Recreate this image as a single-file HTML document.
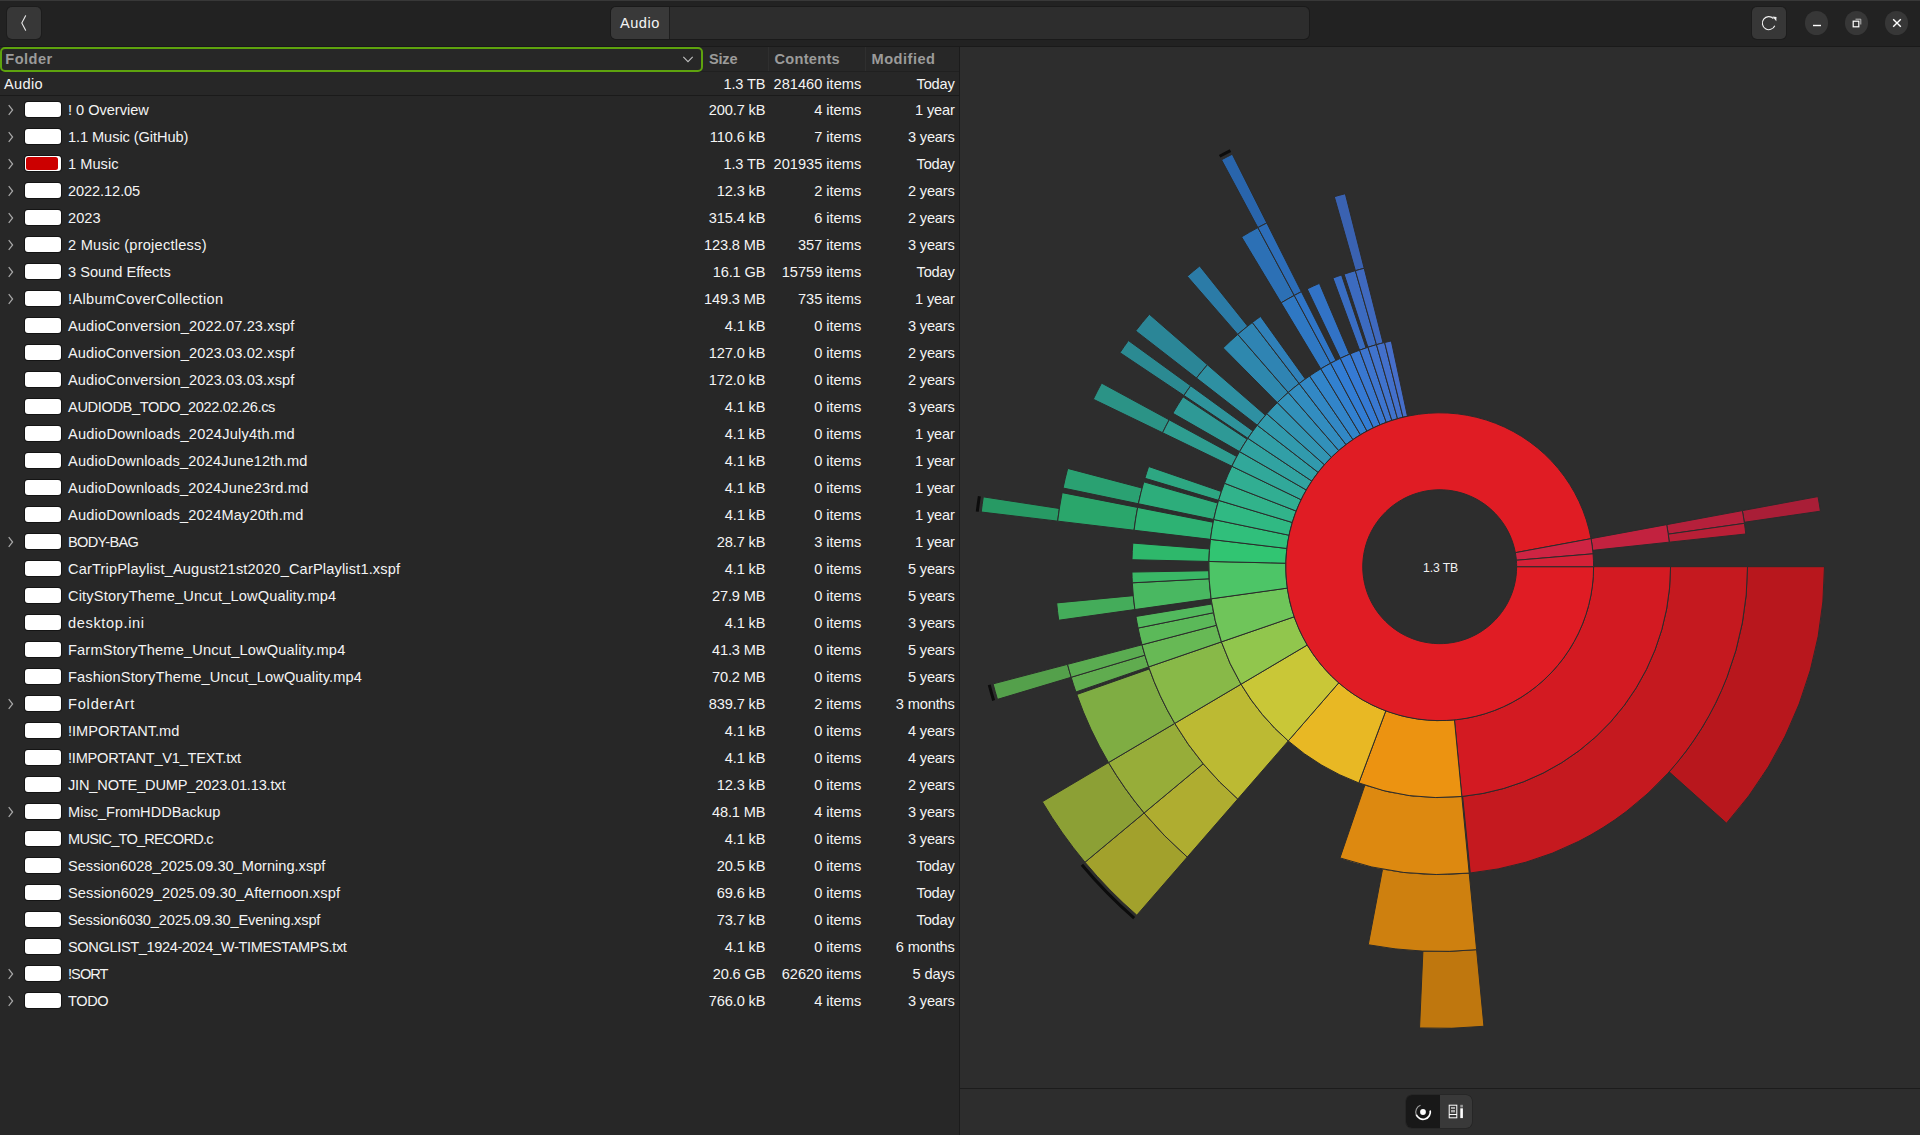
<!DOCTYPE html><html><head><meta charset="utf-8"><title>Disk Usage Analyzer</title><style>
html,body{margin:0;padding:0}
body{width:1920px;height:1135px;overflow:hidden;background:#272727;position:relative;font-family:"Liberation Sans",sans-serif;font-size:14.6px;color:#f4f4f4}
#hb{position:absolute;left:0;top:0;width:1920px;height:47px;background:#222222;box-shadow:inset 0 1px 0 #383838, inset 0 -1px 0 #1a1a1a}
.btn{position:absolute;background:#373737;border-radius:5px;box-shadow:0 0 0 1px #1c1c1c}
#back{left:7px;top:7px;width:34px;height:32px}
#refresh{left:1752px;top:7px;width:34px;height:32px}
#path{position:absolute;left:611px;top:7px;width:698px;height:32px;background:#2d2d2d;border-radius:5px;box-shadow:0 0 0 1px #1a1a1a;overflow:hidden}
#path .cur{position:absolute;left:0;top:0;width:58px;height:32px;background:#393939;border-right:1px solid #1e1e1e}
#path .cur span{position:absolute;left:9px;top:7.5px;line-height:17px}
.wc{position:absolute;top:11.4px;width:23.2px;height:23.2px;border-radius:12px;background:#373737}
#list{position:absolute;left:0;top:47px;width:959px;height:1088px;background:#272727}
#sep{position:absolute;left:959px;top:47px;width:1px;height:1088px;background:#1b1b1b}
#chartp{position:absolute;left:960px;top:47px;width:960px;height:1088px;background:#2d2d2d}
#chartp .chart{position:absolute;left:0;top:0}
#bbar{position:absolute;left:0;top:1041px;width:960px;height:47px;border-top:1px solid #1c1c1c;box-sizing:border-box}
.hdr{position:absolute;top:47px;height:24px;font-weight:bold;color:#9b9b9a;line-height:24px}
.hsep{position:absolute;top:47px;width:1px;height:24px;background:#2f2f2f}
#focus{position:absolute;left:0;top:47px;width:703px;height:25px;box-sizing:border-box;border:2px solid #5ea30e;border-radius:5px}
.hline{position:absolute;left:0;width:959px;height:1px;background:#1a1a1a}
.row{position:absolute;left:0;width:959px;height:27px;line-height:27px;white-space:nowrap}
.row .exp{position:absolute;left:6.6px;top:7.4px}
.row .sw{position:absolute;left:25px;top:5.4px;width:36.3px;height:15.4px;background:#fff;border-radius:3px;box-shadow:0 0 0 1px #141414}
.row .sw.red:after{content:'';position:absolute;left:1.1px;top:1.1px;width:32.2px;height:13.2px;border-radius:2.5px;background:#cc0000}
.row .nm{position:absolute;left:68px;top:0}
.row .c1,.row .c2,.row .c3{position:absolute;top:0;text-align:right}
.row .c1{right:193.6px;letter-spacing:-0.12px}.row .c2{right:97.8px}.row .c3{right:4.3px;letter-spacing:-0.15px}
#tg{position:absolute;left:446.3px;top:1048.4px;width:66.2px;height:32.8px;border-radius:6px;background:#393939;overflow:hidden;box-shadow:0 0 0 0.6px #222}
#tg .on{position:absolute;left:0;top:0;width:33.3px;height:33px;background:#181818}
</style></head><body>
<div id="hb">
<div class="btn" id="back"><svg width="34" height="32" viewBox="0 0 34 32"><path d="M18.6 8.7 L14.8 16 L18.6 23.3" fill="none" stroke="#e8e8e8" stroke-width="1.1" stroke-linecap="round" stroke-linejoin="round"/></svg></div>
<div id="path"><div class="cur"><span style="letter-spacing:0.500px">Audio</span></div></div>
<div class="btn" id="refresh"><svg width="34" height="32" viewBox="0 0 34 32"><path d="M22.8 18.8 A6.5 6.5 0 1 1 21.4 11.5" fill="none" stroke="#f0f0f0" stroke-width="1.1"/><path d="M20.4 9.5 L24.5 10 L24.3 14.3 Z" fill="#f0f0f0"/></svg></div>
<div class="wc" style="left:1805.3px"><svg style="position:absolute;left:-0.4px;top:-0.4px" width="24" height="24"><path d="M8 14.5H16" stroke="#fff" stroke-width="1.4"/></svg></div>
<div class="wc" style="left:1845.3px"><svg style="position:absolute;left:-0.4px;top:-0.4px" width="24" height="24"><rect x="8.2" y="10.2" width="5.6" height="5.6" fill="none" stroke="#fff" stroke-width="1.2"/><path d="M10.5 8.2H15.8V13.5" fill="none" stroke="#bbb" stroke-width="1"/></svg></div>
<div class="wc" style="left:1885.1px"><svg style="position:absolute;left:-0.4px;top:-0.4px" width="24" height="24"><path d="M8.2 8.2L15.8 15.8M15.8 8.2L8.2 15.8" stroke="#fff" stroke-width="1.4"/></svg></div>
</div>
<div id="list"></div>
<div class="hdr" style="left:5.3px;letter-spacing:0.450px">Folder</div>
<div class="hdr" style="left:708.9px;letter-spacing:-0.200px">Size</div>
<div class="hdr" style="left:774.4px;letter-spacing:0.300px">Contents</div>
<div class="hdr" style="left:871.5px;letter-spacing:0.500px">Modified</div>
<div class="hsep" style="left:768px"></div><div class="hsep" style="left:865px"></div>
<svg style="position:absolute;left:681px;top:54px" width="14" height="10" viewBox="0 0 14 10"><path d="M2.3 2.9 L7 7.6 L11.7 2.9" fill="none" stroke="#c0c0c0" stroke-width="1.1"/></svg>
<div class="hline" style="top:71px;background:#202020"></div>
<div id="focus"></div>
<div class="row" style="top:70.5px"><span class="nm" style="left:4px;letter-spacing:0.350px">Audio</span><span class="c1">1.3 TB</span><span class="c2">281460 items</span><span class="c3">Today</span></div>
<div class="hline" style="top:95px"></div>
<div class="row" style="top:96.5px">
<svg class="exp" width="8" height="12" viewBox="0 0 8 12"><path d="M1.7 1.2 L5.6 6 L1.7 10.8" fill="none" stroke="#a9a9a9" stroke-width="1.2"/></svg>
<span class="sw"></span>
<span class="nm" style="letter-spacing:-0.027px">! 0 Overview</span>
<span class="c1">200.7 kB</span><span class="c2">4 items</span><span class="c3">1 year</span>
</div>
<div class="row" style="top:123.5px">
<svg class="exp" width="8" height="12" viewBox="0 0 8 12"><path d="M1.7 1.2 L5.6 6 L1.7 10.8" fill="none" stroke="#a9a9a9" stroke-width="1.2"/></svg>
<span class="sw"></span>
<span class="nm" style="letter-spacing:-0.076px">1.1 Music (GitHub)</span>
<span class="c1">110.6 kB</span><span class="c2">7 items</span><span class="c3">3 years</span>
</div>
<div class="row" style="top:150.5px">
<svg class="exp" width="8" height="12" viewBox="0 0 8 12"><path d="M1.7 1.2 L5.6 6 L1.7 10.8" fill="none" stroke="#a9a9a9" stroke-width="1.2"/></svg>
<span class="sw red"></span>
<span class="nm" style="letter-spacing:0.033px">1 Music</span>
<span class="c1">1.3 TB</span><span class="c2">201935 items</span><span class="c3">Today</span>
</div>
<div class="row" style="top:177.5px">
<svg class="exp" width="8" height="12" viewBox="0 0 8 12"><path d="M1.7 1.2 L5.6 6 L1.7 10.8" fill="none" stroke="#a9a9a9" stroke-width="1.2"/></svg>
<span class="sw"></span>
<span class="nm" style="letter-spacing:-0.089px">2022.12.05</span>
<span class="c1">12.3 kB</span><span class="c2">2 items</span><span class="c3">2 years</span>
</div>
<div class="row" style="top:204.5px">
<svg class="exp" width="8" height="12" viewBox="0 0 8 12"><path d="M1.7 1.2 L5.6 6 L1.7 10.8" fill="none" stroke="#a9a9a9" stroke-width="1.2"/></svg>
<span class="sw"></span>
<span class="nm" style="letter-spacing:0.067px">2023</span>
<span class="c1">315.4 kB</span><span class="c2">6 items</span><span class="c3">2 years</span>
</div>
<div class="row" style="top:231.5px">
<svg class="exp" width="8" height="12" viewBox="0 0 8 12"><path d="M1.7 1.2 L5.6 6 L1.7 10.8" fill="none" stroke="#a9a9a9" stroke-width="1.2"/></svg>
<span class="sw"></span>
<span class="nm" style="letter-spacing:0.235px">2 Music (projectless)</span>
<span class="c1">123.8 MB</span><span class="c2">357 items</span><span class="c3">3 years</span>
</div>
<div class="row" style="top:258.5px">
<svg class="exp" width="8" height="12" viewBox="0 0 8 12"><path d="M1.7 1.2 L5.6 6 L1.7 10.8" fill="none" stroke="#a9a9a9" stroke-width="1.2"/></svg>
<span class="sw"></span>
<span class="nm" style="letter-spacing:0.000px">3 Sound Effects</span>
<span class="c1">16.1 GB</span><span class="c2">15759 items</span><span class="c3">Today</span>
</div>
<div class="row" style="top:285.5px">
<svg class="exp" width="8" height="12" viewBox="0 0 8 12"><path d="M1.7 1.2 L5.6 6 L1.7 10.8" fill="none" stroke="#a9a9a9" stroke-width="1.2"/></svg>
<span class="sw"></span>
<span class="nm" style="letter-spacing:0.335px">!AlbumCoverCollection</span>
<span class="c1">149.3 MB</span><span class="c2">735 items</span><span class="c3">1 year</span>
</div>
<div class="row" style="top:312.5px">
<span class="sw"></span>
<span class="nm" style="letter-spacing:0.107px">AudioConversion_2022.07.23.xspf</span>
<span class="c1">4.1 kB</span><span class="c2">0 items</span><span class="c3">3 years</span>
</div>
<div class="row" style="top:339.5px">
<span class="sw"></span>
<span class="nm" style="letter-spacing:0.107px">AudioConversion_2023.03.02.xspf</span>
<span class="c1">127.0 kB</span><span class="c2">0 items</span><span class="c3">2 years</span>
</div>
<div class="row" style="top:366.5px">
<span class="sw"></span>
<span class="nm" style="letter-spacing:0.107px">AudioConversion_2023.03.03.xspf</span>
<span class="c1">172.0 kB</span><span class="c2">0 items</span><span class="c3">2 years</span>
</div>
<div class="row" style="top:393.5px">
<span class="sw"></span>
<span class="nm" style="letter-spacing:-0.356px">AUDIODB_TODO_2022.02.26.cs</span>
<span class="c1">4.1 kB</span><span class="c2">0 items</span><span class="c3">3 years</span>
</div>
<div class="row" style="top:420.5px">
<span class="sw"></span>
<span class="nm" style="letter-spacing:0.214px">AudioDownloads_2024July4th.md</span>
<span class="c1">4.1 kB</span><span class="c2">0 items</span><span class="c3">1 year</span>
</div>
<div class="row" style="top:447.5px">
<span class="sw"></span>
<span class="nm" style="letter-spacing:0.172px">AudioDownloads_2024June12th.md</span>
<span class="c1">4.1 kB</span><span class="c2">0 items</span><span class="c3">1 year</span>
</div>
<div class="row" style="top:474.5px">
<span class="sw"></span>
<span class="nm" style="letter-spacing:0.172px">AudioDownloads_2024June23rd.md</span>
<span class="c1">4.1 kB</span><span class="c2">0 items</span><span class="c3">1 year</span>
</div>
<div class="row" style="top:501.5px">
<span class="sw"></span>
<span class="nm" style="letter-spacing:0.175px">AudioDownloads_2024May20th.md</span>
<span class="c1">4.1 kB</span><span class="c2">0 items</span><span class="c3">1 year</span>
</div>
<div class="row" style="top:528.5px">
<svg class="exp" width="8" height="12" viewBox="0 0 8 12"><path d="M1.7 1.2 L5.6 6 L1.7 10.8" fill="none" stroke="#a9a9a9" stroke-width="1.2"/></svg>
<span class="sw"></span>
<span class="nm" style="letter-spacing:-0.700px">BODY-BAG</span>
<span class="c1">28.7 kB</span><span class="c2">3 items</span><span class="c3">1 year</span>
</div>
<div class="row" style="top:555.5px">
<span class="sw"></span>
<span class="nm" style="letter-spacing:0.157px">CarTripPlaylist_August21st2020_CarPlaylist1.xspf</span>
<span class="c1">4.1 kB</span><span class="c2">0 items</span><span class="c3">5 years</span>
</div>
<div class="row" style="top:582.5px">
<span class="sw"></span>
<span class="nm" style="letter-spacing:0.165px">CityStoryTheme_Uncut_LowQuality.mp4</span>
<span class="c1">27.9 MB</span><span class="c2">0 items</span><span class="c3">5 years</span>
</div>
<div class="row" style="top:609.5px">
<span class="sw"></span>
<span class="nm" style="letter-spacing:0.630px">desktop.ini</span>
<span class="c1">4.1 kB</span><span class="c2">0 items</span><span class="c3">3 years</span>
</div>
<div class="row" style="top:636.5px">
<span class="sw"></span>
<span class="nm" style="letter-spacing:0.171px">FarmStoryTheme_Uncut_LowQuality.mp4</span>
<span class="c1">41.3 MB</span><span class="c2">0 items</span><span class="c3">5 years</span>
</div>
<div class="row" style="top:663.5px">
<span class="sw"></span>
<span class="nm" style="letter-spacing:0.124px">FashionStoryTheme_Uncut_LowQuality.mp4</span>
<span class="c1">70.2 MB</span><span class="c2">0 items</span><span class="c3">5 years</span>
</div>
<div class="row" style="top:690.5px">
<svg class="exp" width="8" height="12" viewBox="0 0 8 12"><path d="M1.7 1.2 L5.6 6 L1.7 10.8" fill="none" stroke="#a9a9a9" stroke-width="1.2"/></svg>
<span class="sw"></span>
<span class="nm" style="letter-spacing:0.787px">FolderArt</span>
<span class="c1">839.7 kB</span><span class="c2">2 items</span><span class="c3">3 months</span>
</div>
<div class="row" style="top:717.5px">
<span class="sw"></span>
<span class="nm" style="letter-spacing:0.000px">!IMPORTANT.md</span>
<span class="c1">4.1 kB</span><span class="c2">0 items</span><span class="c3">4 years</span>
</div>
<div class="row" style="top:744.5px">
<span class="sw"></span>
<span class="nm" style="letter-spacing:-0.224px">!IMPORTANT_V1_TEXT.txt</span>
<span class="c1">4.1 kB</span><span class="c2">0 items</span><span class="c3">4 years</span>
</div>
<div class="row" style="top:771.5px">
<span class="sw"></span>
<span class="nm" style="letter-spacing:-0.174px">JIN_NOTE_DUMP_2023.01.13.txt</span>
<span class="c1">12.3 kB</span><span class="c2">0 items</span><span class="c3">2 years</span>
</div>
<div class="row" style="top:798.5px">
<svg class="exp" width="8" height="12" viewBox="0 0 8 12"><path d="M1.7 1.2 L5.6 6 L1.7 10.8" fill="none" stroke="#a9a9a9" stroke-width="1.2"/></svg>
<span class="sw"></span>
<span class="nm" style="letter-spacing:-0.006px">Misc_FromHDDBackup</span>
<span class="c1">48.1 MB</span><span class="c2">4 items</span><span class="c3">3 years</span>
</div>
<div class="row" style="top:825.5px">
<span class="sw"></span>
<span class="nm" style="letter-spacing:-0.769px">MUSIC_TO_RECORD.c</span>
<span class="c1">4.1 kB</span><span class="c2">0 items</span><span class="c3">3 years</span>
</div>
<div class="row" style="top:852.5px">
<span class="sw"></span>
<span class="nm" style="letter-spacing:0.006px">Session6028_2025.09.30_Morning.xspf</span>
<span class="c1">20.5 kB</span><span class="c2">0 items</span><span class="c3">Today</span>
</div>
<div class="row" style="top:879.5px">
<span class="sw"></span>
<span class="nm" style="letter-spacing:0.117px">Session6029_2025.09.30_Afternoon.xspf</span>
<span class="c1">69.6 kB</span><span class="c2">0 items</span><span class="c3">Today</span>
</div>
<div class="row" style="top:906.5px">
<span class="sw"></span>
<span class="nm" style="letter-spacing:-0.141px">Session6030_2025.09.30_Evening.xspf</span>
<span class="c1">73.7 kB</span><span class="c2">0 items</span><span class="c3">Today</span>
</div>
<div class="row" style="top:933.5px">
<span class="sw"></span>
<span class="nm" style="letter-spacing:-0.368px">SONGLIST_1924-2024_W-TIMESTAMPS.txt</span>
<span class="c1">4.1 kB</span><span class="c2">0 items</span><span class="c3">6 months</span>
</div>
<div class="row" style="top:960.5px">
<svg class="exp" width="8" height="12" viewBox="0 0 8 12"><path d="M1.7 1.2 L5.6 6 L1.7 10.8" fill="none" stroke="#a9a9a9" stroke-width="1.2"/></svg>
<span class="sw"></span>
<span class="nm" style="letter-spacing:-0.950px">!SORT</span>
<span class="c1">20.6 GB</span><span class="c2">62620 items</span><span class="c3">5 days</span>
</div>
<div class="row" style="top:987.5px">
<svg class="exp" width="8" height="12" viewBox="0 0 8 12"><path d="M1.7 1.2 L5.6 6 L1.7 10.8" fill="none" stroke="#a9a9a9" stroke-width="1.2"/></svg>
<span class="sw"></span>
<span class="nm" style="letter-spacing:-0.433px">TODO</span>
<span class="c1">766.0 kB</span><span class="c2">4 items</span><span class="c3">3 years</span>
</div>
<div id="sep"></div>
<div id="chartp">
<svg class="chart" width="960" height="1041" viewBox="0 0 960 1041">
<g stroke="#2b2b2b" stroke-width="1" stroke-linejoin="round">
<path d="M516.58 902.68A384.75 384.75 0 0 1 462.92 904.08L459.56 980.96A461.70 461.70 0 0 0 523.95 979.27Z" fill="#bf770e"/>
<path d="M227.28 810.07A384.75 384.75 0 0 1 184.10 765.98L124.98 815.24A461.70 461.70 0 0 0 176.80 868.15Z" fill="#a2a12c"/>
<path d="M184.10 765.98A384.75 384.75 0 0 1 148.53 715.55L82.30 754.72A461.70 461.70 0 0 0 124.98 815.24Z" fill="#8ca035"/>
<path d="M111.18 630.26A384.75 384.75 0 0 1 107.54 617.33L33.11 636.86A461.70 461.70 0 0 0 37.47 652.37Z" fill="#54a04b"/>
<path d="M97.66 474.14A384.75 384.75 0 0 1 99.38 461.50L23.31 449.86A461.70 461.70 0 0 0 21.25 465.03Z" fill="#279a64"/>
<path d="M297.89 180.62A384.75 384.75 0 0 1 306.82 175.98L272.25 107.23A461.70 461.70 0 0 0 261.52 112.80Z" fill="#2965ac"/>
<path d="M787.50 519.70A307.80 307.80 0 0 1 709.16 724.86L766.52 776.15A384.75 384.75 0 0 0 864.45 519.70Z" fill="#b8171d"/>
<path d="M509.20 826.08A307.80 307.80 0 0 1 422.55 822.15L408.26 897.76A384.75 384.75 0 0 0 516.58 902.68Z" fill="#ce800f"/>
<path d="M277.77 752.00A307.80 307.80 0 0 1 243.22 716.73L184.10 765.98A384.75 384.75 0 0 0 227.28 810.07Z" fill="#afad30"/>
<path d="M243.22 716.73A307.80 307.80 0 0 1 214.76 676.38L148.53 715.55A384.75 384.75 0 0 0 184.10 765.98Z" fill="#97ad39"/>
<path d="M214.76 676.38A307.80 307.80 0 0 1 189.38 621.94L116.80 647.50A384.75 384.75 0 0 0 148.53 715.55Z" fill="#7fad43"/>
<path d="M188.67 619.91A307.80 307.80 0 0 1 184.88 608.15L111.18 630.26A384.75 384.75 0 0 0 115.91 644.96Z" fill="#60ac4f"/>
<path d="M184.88 608.15A307.80 307.80 0 0 1 181.97 597.81L107.54 617.33A384.75 384.75 0 0 0 111.18 630.26Z" fill="#5aac51"/>
<path d="M174.90 562.54A307.80 307.80 0 0 1 173.27 548.67L96.66 555.91A384.75 384.75 0 0 0 98.69 573.25Z" fill="#44ac5a"/>
<path d="M174.07 483.26A307.80 307.80 0 0 1 177.66 460.44L102.15 445.63A384.75 384.75 0 0 0 97.66 474.14Z" fill="#2aa66b"/>
<path d="M178.40 456.76A307.80 307.80 0 0 1 182.11 441.07L107.71 421.42A384.75 384.75 0 0 0 103.08 441.02Z" fill="#2aa172"/>
<path d="M202.58 385.74A307.80 307.80 0 0 1 209.20 372.83L141.58 336.11A384.75 384.75 0 0 0 133.30 352.24Z" fill="#2b9386"/>
<path d="M223.92 348.47A307.80 307.80 0 0 1 230.68 338.78L168.43 293.55A384.75 384.75 0 0 0 159.98 305.67Z" fill="#2b8a92"/>
<path d="M236.49 331.05A307.80 307.80 0 0 1 247.40 317.77L189.33 267.28A384.75 384.75 0 0 0 175.69 283.88Z" fill="#2b8697"/>
<path d="M277.77 287.40A307.80 307.80 0 0 1 287.67 279.15L239.66 219.01A384.75 384.75 0 0 0 227.28 229.33Z" fill="#2b7ba7"/>
<path d="M321.17 255.86A307.80 307.80 0 0 1 334.25 248.43L297.89 180.62A384.75 384.75 0 0 0 281.54 189.90Z" fill="#2c70b5"/>
<path d="M334.25 248.43A307.80 307.80 0 0 1 341.40 244.72L306.82 175.98A384.75 384.75 0 0 0 297.89 180.62Z" fill="#2c6db9"/>
<path d="M395.38 223.68A307.80 307.80 0 0 1 404.19 221.30L385.32 146.71A384.75 384.75 0 0 0 374.29 149.67Z" fill="#3a62b1"/>
<path d="M782.35 463.61A307.80 307.80 0 0 1 784.28 475.27L860.42 464.16A384.75 384.75 0 0 0 858.01 449.58Z" fill="#a91e37"/>
<path d="M710.55 519.70A230.85 230.85 0 0 1 502.63 749.41L510.27 825.98A307.80 307.80 0 0 0 787.50 519.70Z" fill="#c5191f"/>
<path d="M501.83 749.49A230.85 230.85 0 0 1 404.92 738.10L380.00 810.91A307.80 307.80 0 0 0 509.20 826.08Z" fill="#dd8910"/>
<path d="M328.25 693.92A230.85 230.85 0 0 1 281.00 637.21L214.76 676.38A307.80 307.80 0 0 0 277.77 752.00Z" fill="#bcba33"/>
<path d="M281.00 637.21A230.85 230.85 0 0 1 261.43 594.86L188.67 619.91A307.80 307.80 0 0 0 214.76 676.38Z" fill="#88b948"/>
<path d="M261.43 594.86A230.85 230.85 0 0 1 256.41 578.28L181.97 597.81A307.80 307.80 0 0 0 188.67 619.91Z" fill="#67b955"/>
<path d="M256.41 578.28A230.85 230.85 0 0 1 253.48 565.72L178.08 581.07A307.80 307.80 0 0 0 181.97 597.81Z" fill="#5bb959"/>
<path d="M253.48 565.72A230.85 230.85 0 0 1 251.88 557.01L175.95 569.44A307.80 307.80 0 0 0 178.08 581.07Z" fill="#52b95d"/>
<path d="M251.10 551.83A230.85 230.85 0 0 1 249.17 531.78L172.32 535.81A307.80 307.80 0 0 0 174.90 562.54Z" fill="#49b861"/>
<path d="M249.17 531.78A230.85 230.85 0 0 1 248.89 523.73L171.95 525.07A307.80 307.80 0 0 0 172.32 535.81Z" fill="#3ab866"/>
<path d="M248.91 514.46A230.85 230.85 0 0 1 249.53 501.99L172.81 496.09A307.80 307.80 0 0 0 171.98 512.72Z" fill="#2eb86b"/>
<path d="M250.47 492.37A230.85 230.85 0 0 1 253.17 475.26L177.66 460.44A307.80 307.80 0 0 0 174.07 483.26Z" fill="#2db273"/>
<path d="M253.73 472.49A230.85 230.85 0 0 1 257.79 456.07L183.82 434.86A307.80 307.80 0 0 0 178.40 456.76Z" fill="#2dad7b"/>
<path d="M258.59 453.36A230.85 230.85 0 0 1 261.43 444.54L188.67 419.49A307.80 307.80 0 0 0 184.88 431.25Z" fill="#2da782"/>
<path d="M271.86 419.23A230.85 230.85 0 0 1 276.83 409.55L209.20 372.83A307.80 307.80 0 0 0 202.58 385.74Z" fill="#2e9d90"/>
<path d="M279.58 404.62A230.85 230.85 0 0 1 287.20 392.29L223.03 349.81A307.80 307.80 0 0 0 212.87 366.27Z" fill="#2e9996"/>
<path d="M287.87 391.28A230.85 230.85 0 0 1 292.94 384.01L230.68 338.78A307.80 307.80 0 0 0 223.92 348.47Z" fill="#2e949c"/>
<path d="M297.29 378.21A230.85 230.85 0 0 1 305.48 368.25L247.40 317.77A307.80 307.80 0 0 0 236.49 331.05Z" fill="#2e90a2"/>
<path d="M317.32 355.61A230.85 230.85 0 0 1 328.25 345.48L277.77 287.40A307.80 307.80 0 0 0 263.20 300.92Z" fill="#2e88ae"/>
<path d="M328.25 345.48A230.85 230.85 0 0 1 339.17 336.55L292.32 275.51A307.80 307.80 0 0 0 277.77 287.40Z" fill="#2f84b3"/>
<path d="M339.17 336.55A230.85 230.85 0 0 1 345.32 332.00L300.52 269.43A307.80 307.80 0 0 0 292.32 275.51Z" fill="#2f80b9"/>
<path d="M360.80 321.82A230.85 230.85 0 0 1 370.61 316.25L334.25 248.43A307.80 307.80 0 0 0 321.17 255.86Z" fill="#2f78c3"/>
<path d="M370.61 316.25A230.85 230.85 0 0 1 375.97 313.47L341.40 244.72A307.80 307.80 0 0 0 334.25 248.43Z" fill="#2f75c7"/>
<path d="M380.32 311.34A230.85 230.85 0 0 1 389.50 307.20L359.43 236.37A307.80 307.80 0 0 0 347.19 241.88Z" fill="#3273c6"/>
<path d="M399.61 303.19A230.85 230.85 0 0 1 406.07 300.91L381.52 227.98A307.80 307.80 0 0 0 372.91 231.02Z" fill="#396dc2"/>
<path d="M407.98 300.27A230.85 230.85 0 0 1 416.46 297.68L395.38 223.68A307.80 307.80 0 0 0 384.07 227.13Z" fill="#3c6bc0"/>
<path d="M416.46 297.68A230.85 230.85 0 0 1 423.07 295.90L404.19 221.30A307.80 307.80 0 0 0 395.38 223.68Z" fill="#3f69be"/>
<path d="M706.68 477.63A230.85 230.85 0 0 1 708.25 487.17L784.43 476.33A307.80 307.80 0 0 0 782.35 463.61Z" fill="#b5203b"/>
<path d="M708.25 487.17A230.85 230.85 0 0 1 709.24 495.17L785.76 486.99A307.80 307.80 0 0 0 784.43 476.33Z" fill="#b81f36"/>
<path d="M633.60 519.70A153.90 153.90 0 0 1 494.45 672.89L501.83 749.49A230.85 230.85 0 0 0 710.55 519.70Z" fill="#d31a22"/>
<path d="M494.45 672.89A153.90 153.90 0 0 1 425.80 663.85L398.85 735.93A230.85 230.85 0 0 0 501.83 749.49Z" fill="#ec9311"/>
<path d="M425.80 663.85A153.90 153.90 0 0 1 378.73 635.85L328.25 693.92A230.85 230.85 0 0 0 398.85 735.93Z" fill="#e8b824"/>
<path d="M378.73 635.85A153.90 153.90 0 0 1 347.23 598.04L281.00 637.21A230.85 230.85 0 0 0 328.25 693.92Z" fill="#c9c737"/>
<path d="M347.23 598.04A153.90 153.90 0 0 1 334.18 569.80L261.43 594.86A230.85 230.85 0 0 0 281.00 637.21Z" fill="#91c64d"/>
<path d="M334.18 569.80A153.90 153.90 0 0 1 327.30 541.12L251.10 551.83A230.85 230.85 0 0 0 261.43 594.86Z" fill="#6fc55a"/>
<path d="M327.30 541.12A153.90 153.90 0 0 1 325.84 516.21L248.91 514.46A230.85 230.85 0 0 0 251.10 551.83Z" fill="#4dc567"/>
<path d="M325.84 516.21A153.90 153.90 0 0 1 326.88 501.48L250.47 492.37A230.85 230.85 0 0 0 248.91 514.46Z" fill="#31c572"/>
<path d="M326.88 501.48A153.90 153.90 0 0 1 329.05 488.23L253.73 472.49A230.85 230.85 0 0 0 250.47 492.37Z" fill="#30bf7b"/>
<path d="M329.05 488.23A153.90 153.90 0 0 1 332.29 475.48L258.59 453.36A230.85 230.85 0 0 0 253.73 472.49Z" fill="#30b983"/>
<path d="M332.29 475.48A153.90 153.90 0 0 1 336.22 464.05L264.47 436.22A230.85 230.85 0 0 0 258.59 453.36Z" fill="#31b38b"/>
<path d="M336.22 464.05A153.90 153.90 0 0 1 341.14 452.72L271.86 419.23A230.85 230.85 0 0 0 264.47 436.22Z" fill="#31ae92"/>
<path d="M341.14 452.72A153.90 153.90 0 0 1 346.28 442.98L279.58 404.62A230.85 230.85 0 0 0 271.86 419.23Z" fill="#31a89a"/>
<path d="M346.28 442.98A153.90 153.90 0 0 1 351.81 434.09L287.87 391.28A230.85 230.85 0 0 0 279.58 404.62Z" fill="#31a3a1"/>
<path d="M351.81 434.09A153.90 153.90 0 0 1 358.10 425.37L297.29 378.21A230.85 230.85 0 0 0 287.87 391.28Z" fill="#319fa7"/>
<path d="M358.10 425.37A153.90 153.90 0 0 1 364.44 417.72L306.80 366.73A230.85 230.85 0 0 0 297.29 378.21Z" fill="#319aad"/>
<path d="M364.44 417.72A153.90 153.90 0 0 1 371.45 410.31L317.32 355.61A230.85 230.85 0 0 0 306.80 366.73Z" fill="#3295b3"/>
<path d="M371.45 410.31A153.90 153.90 0 0 1 378.73 403.55L328.25 345.48A230.85 230.85 0 0 0 317.32 355.61Z" fill="#3291ba"/>
<path d="M378.73 403.55A153.90 153.90 0 0 1 386.01 397.60L339.17 336.55A230.85 230.85 0 0 0 328.25 345.48Z" fill="#328dc0"/>
<path d="M386.01 397.60A153.90 153.90 0 0 1 392.97 392.56L349.61 329.00A230.85 230.85 0 0 0 339.17 336.55Z" fill="#3288c5"/>
<path d="M392.97 392.56A153.90 153.90 0 0 1 400.44 387.78L360.80 321.82A230.85 230.85 0 0 0 349.61 329.00Z" fill="#3285ca"/>
<path d="M400.44 387.78A153.90 153.90 0 0 1 406.97 384.07L370.61 316.25A230.85 230.85 0 0 0 360.80 321.82Z" fill="#3281d0"/>
<path d="M406.97 384.07A153.90 153.90 0 0 1 413.44 380.79L380.32 311.34A230.85 230.85 0 0 0 370.61 316.25Z" fill="#327dd4"/>
<path d="M413.44 380.79A153.90 153.90 0 0 1 420.06 377.83L390.24 306.89A230.85 230.85 0 0 0 380.32 311.34Z" fill="#357ad4"/>
<path d="M420.06 377.83A153.90 153.90 0 0 1 426.31 375.36L399.61 303.19A230.85 230.85 0 0 0 390.24 306.89Z" fill="#3978d1"/>
<path d="M426.31 375.36A153.90 153.90 0 0 1 431.89 373.42L407.98 300.27A230.85 230.85 0 0 0 399.61 303.19Z" fill="#3d75cf"/>
<path d="M431.89 373.42A153.90 153.90 0 0 1 437.54 371.69L416.46 297.68A230.85 230.85 0 0 0 407.98 300.27Z" fill="#4073cd"/>
<path d="M437.54 371.69A153.90 153.90 0 0 1 442.99 370.24L424.63 295.51A230.85 230.85 0 0 0 416.46 297.68Z" fill="#4370cb"/>
<path d="M442.99 370.24A153.90 153.90 0 0 1 447.44 369.22L431.31 293.98A230.85 230.85 0 0 0 424.63 295.51Z" fill="#466ec9"/>
<path d="M631.02 491.65A153.90 153.90 0 0 1 632.73 503.35L709.24 495.17A230.85 230.85 0 0 0 706.68 477.63Z" fill="#c2223f"/>
<path d="M556.65 519.70A76.95 76.95 0 1 1 555.36 505.68L631.02 491.65A153.90 153.90 0 1 0 633.60 519.70Z" fill="#e01c24"/>
<path d="M555.36 505.68A76.95 76.95 0 0 1 556.38 513.26L633.06 506.82A153.90 153.90 0 0 0 631.02 491.65Z" fill="#ce2443"/>
<path d="M556.38 513.26A76.95 76.95 0 0 1 556.65 519.70L633.60 519.70A153.90 153.90 0 0 0 633.06 506.82Z" fill="#d52137"/>
</g>
<path d="M174.17 871.17A465.70 465.70 0 0 1 121.91 817.80" fill="none" stroke="#0c0c0c" stroke-width="3"/>
<path d="M33.64 653.52A465.70 465.70 0 0 1 29.24 637.88" fill="none" stroke="#0c0c0c" stroke-width="3"/>
<path d="M17.28 464.56A465.70 465.70 0 0 1 19.36 449.26" fill="none" stroke="#0c0c0c" stroke-width="3"/>
<path d="M259.63 109.28A465.70 465.70 0 0 1 270.45 103.66" fill="none" stroke="#0c0c0c" stroke-width="3"/>
<text x="480.6" y="524.5" text-anchor="middle" font-size="12.2" letter-spacing="-0.1" fill="#f2f2f2">1.3 TB</text>
</svg>
<div id="bbar"></div>
<div id="tg"><div class="on"></div>
<svg style="position:absolute;left:0;top:0" width="67" height="33" viewBox="0 0 67 33"><circle cx="17" cy="17" r="2.9" fill="#fff"/><path d="M24.2 15.5 A7.3 7.3 0 0 1 10.2 19.5" fill="none" stroke="#fff" stroke-width="1.7"/><path d="M10.2 19.5 A7.3 7.3 0 0 1 14.5 10.2" fill="none" stroke="#9a9a9a" stroke-width="1.2"/><rect x="43.2" y="10.2" width="7.6" height="12.6" fill="none" stroke="#fff" stroke-width="1"/><rect x="45" y="12" width="4" height="2" fill="#aaa"/><rect x="45" y="15" width="4" height="2.4" fill="#aaa"/><path d="M43 19.5H51" stroke="#fff" stroke-width="1"/><rect x="54.3" y="13.3" width="2.6" height="9.8" fill="#fff"/><rect x="54.3" y="9.8" width="2.6" height="2.6" fill="#999"/></svg></div>
</div>
</body></html>
